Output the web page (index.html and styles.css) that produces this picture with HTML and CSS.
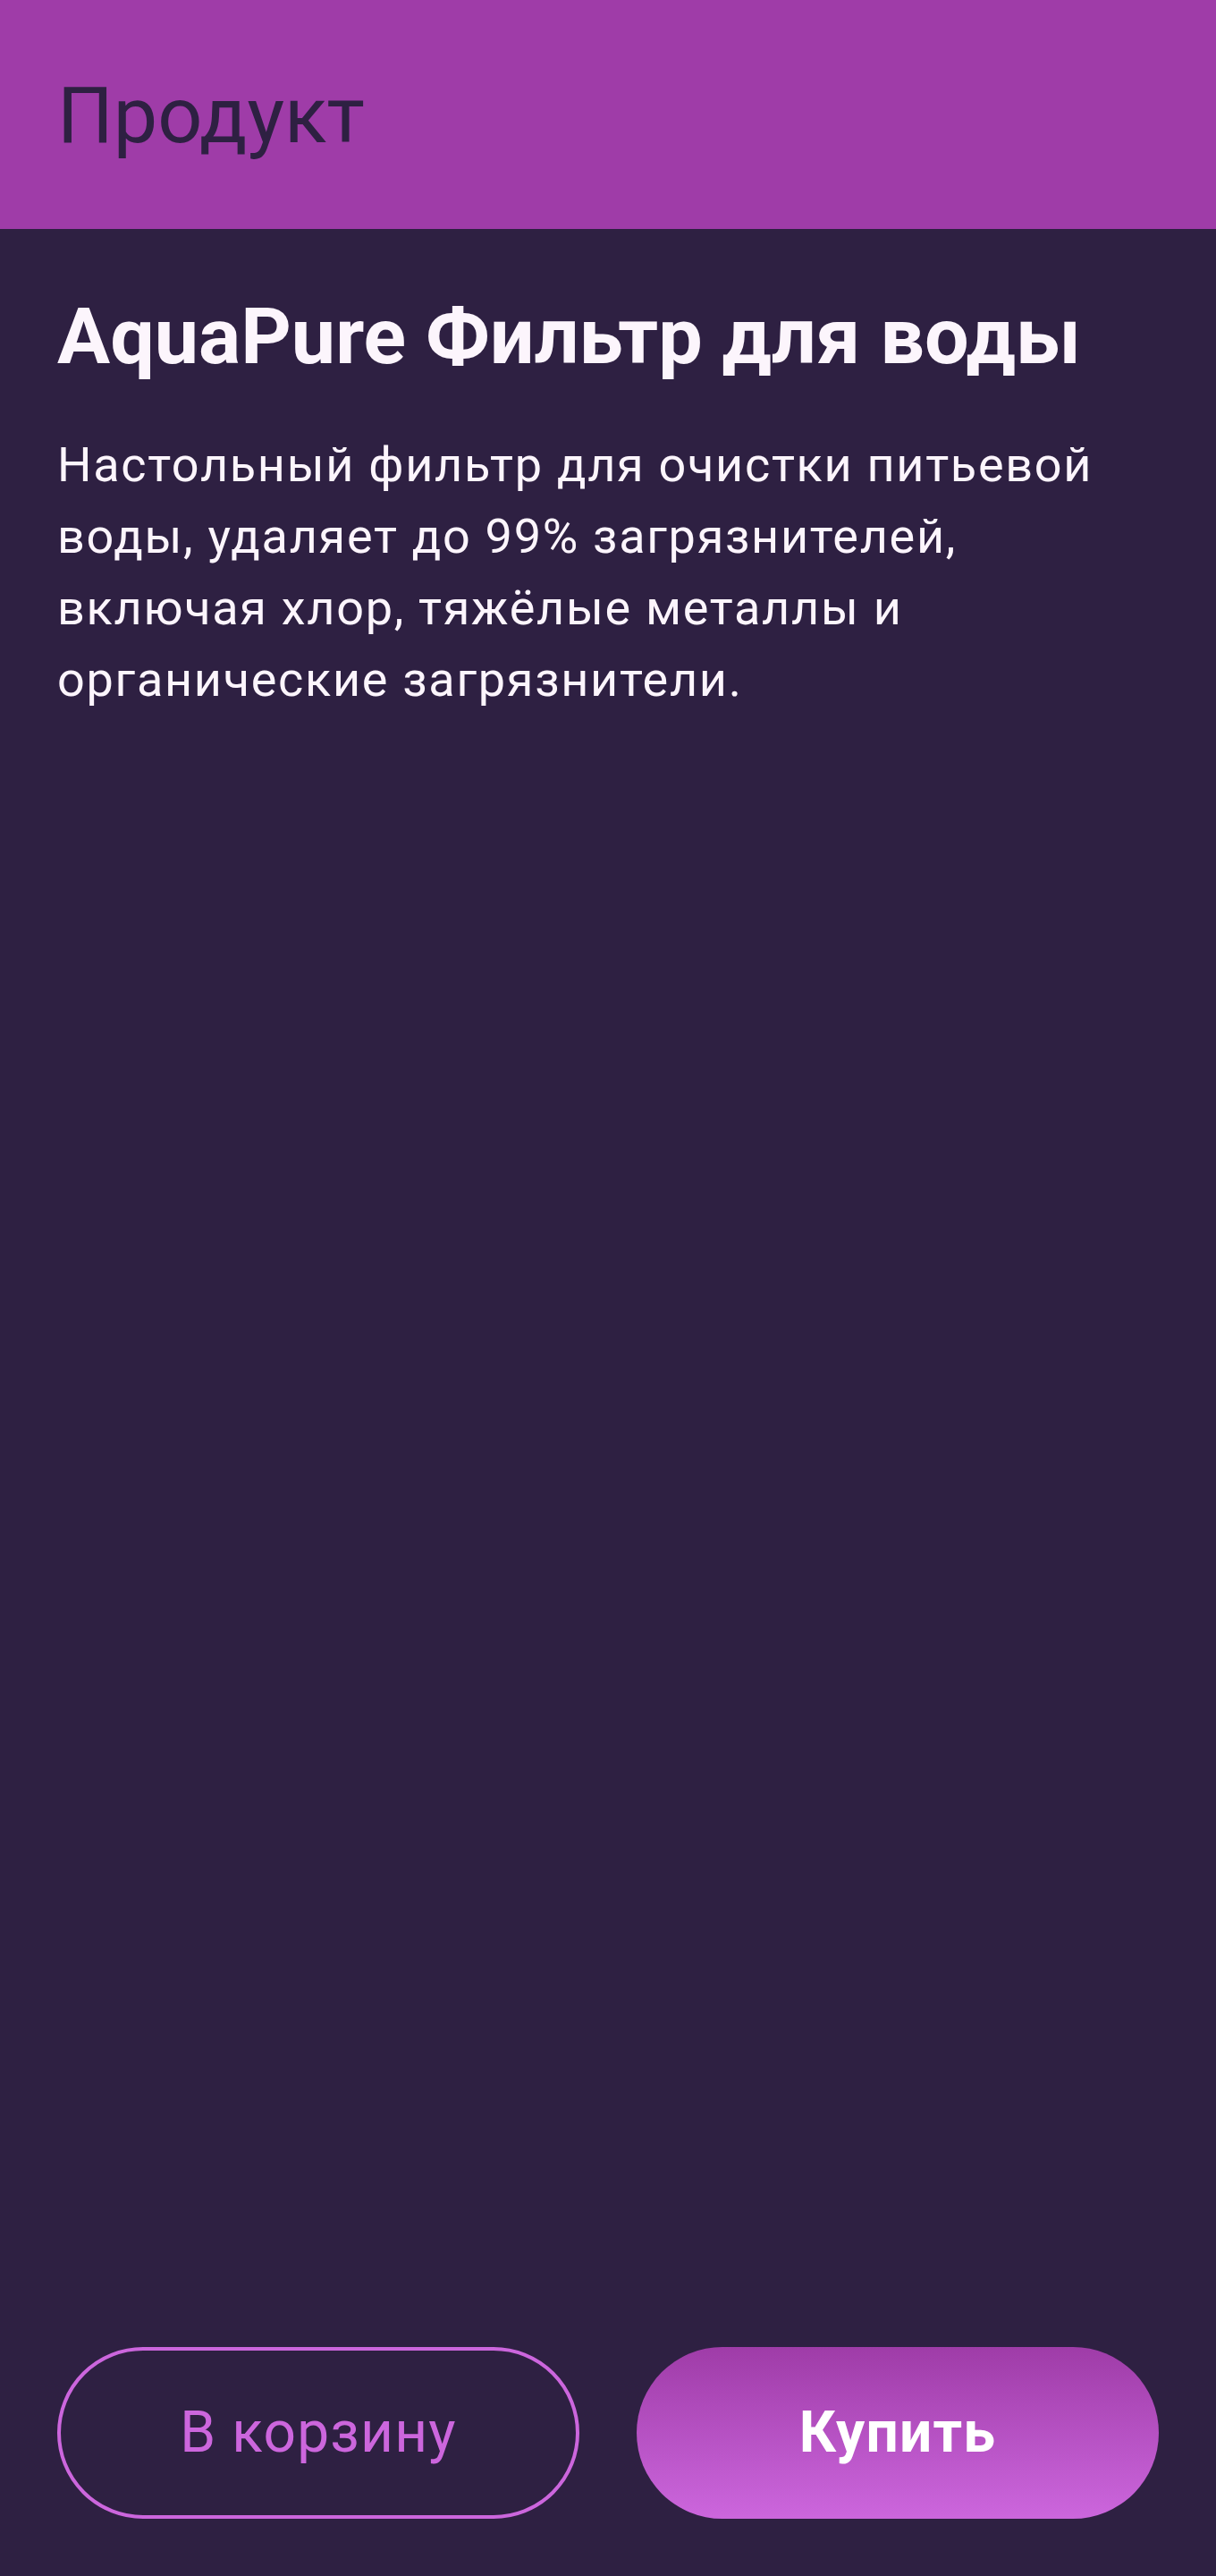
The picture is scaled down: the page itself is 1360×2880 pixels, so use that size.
FILE: index.html
```html
<!DOCTYPE html>
<html lang="ru">
<head>
<meta charset="utf-8">
<title>Продукт</title>
<link rel="stylesheet" href="styles.css">
</head>
<body>
<div class="screen">
  <header class="topbar">
    <h1 class="topbar-title">Продукт</h1>
  </header>
  <main class="content">
    <h2 class="product-title">AquaPure Фильтр для воды</h2>
    <p class="product-desc">Настольный фильтр для очистки питьевой воды, удаляет до 99% загрязнителей, включая хлор, тяжёлые металлы и органические загрязнители.</p>
  </main>
  <footer class="actions">
    <button class="btn btn-outline" type="button">В корзину</button>
    <button class="btn btn-filled" type="button">Купить</button>
  </footer>
</div>
</body>
</html>
```

FILE: styles.css
```css
* {
  box-sizing: border-box;
}

html, body {
  margin: 0;
  padding: 0;
  background: #2e2042;
}

body {
  font-family: Roboto, "Noto Sans", "Liberation Sans", sans-serif;
}

.screen {
  min-height: 2880px;
  display: flex;
  flex-direction: column;
}

.topbar {
  height: 256px;
  background: #9f3ca8;
  display: flex;
  align-items: center;
  padding: 0 64px;
}

.topbar-title {
  margin: 0;
  font-size: 88px;
  font-weight: 400;
  line-height: 103px;
  color: #2e2042;
}

.content {
  flex: 1;
  padding: 68px 64px 0;
}

.product-title {
  margin: 0;
  font-size: 88px;
  font-weight: 700;
  line-height: 104px;
  color: #fcf5fc;
}

.product-desc {
  margin: 52px 0 0;
  font-size: 54px;
  font-weight: 400;
  line-height: 80px;
  letter-spacing: 1.7px;
  color: #fcf5fc;
}

.actions {
  display: grid;
  grid-template-columns: 1fr 1fr;
  gap: 64px;
  padding: 0 64px 64px;
}

.btn {
  height: 192px;
  border-radius: 96px;
  font-family: Roboto, "Noto Sans", "Liberation Sans", sans-serif;
  font-size: 64px;
  line-height: 1;
  letter-spacing: 1.2px;
  display: flex;
  align-items: center;
  justify-content: center;
  padding: 0;
}

.btn-outline {
  background: transparent;
  border: 4px solid #cc66dd;
  color: #cc66dd;
  font-weight: 400;
}

.btn-filled {
  border: none;
  background: linear-gradient(to bottom, #9f3ca8, #cc66dd);
  color: #ffffff;
  font-weight: 700;
}
```
